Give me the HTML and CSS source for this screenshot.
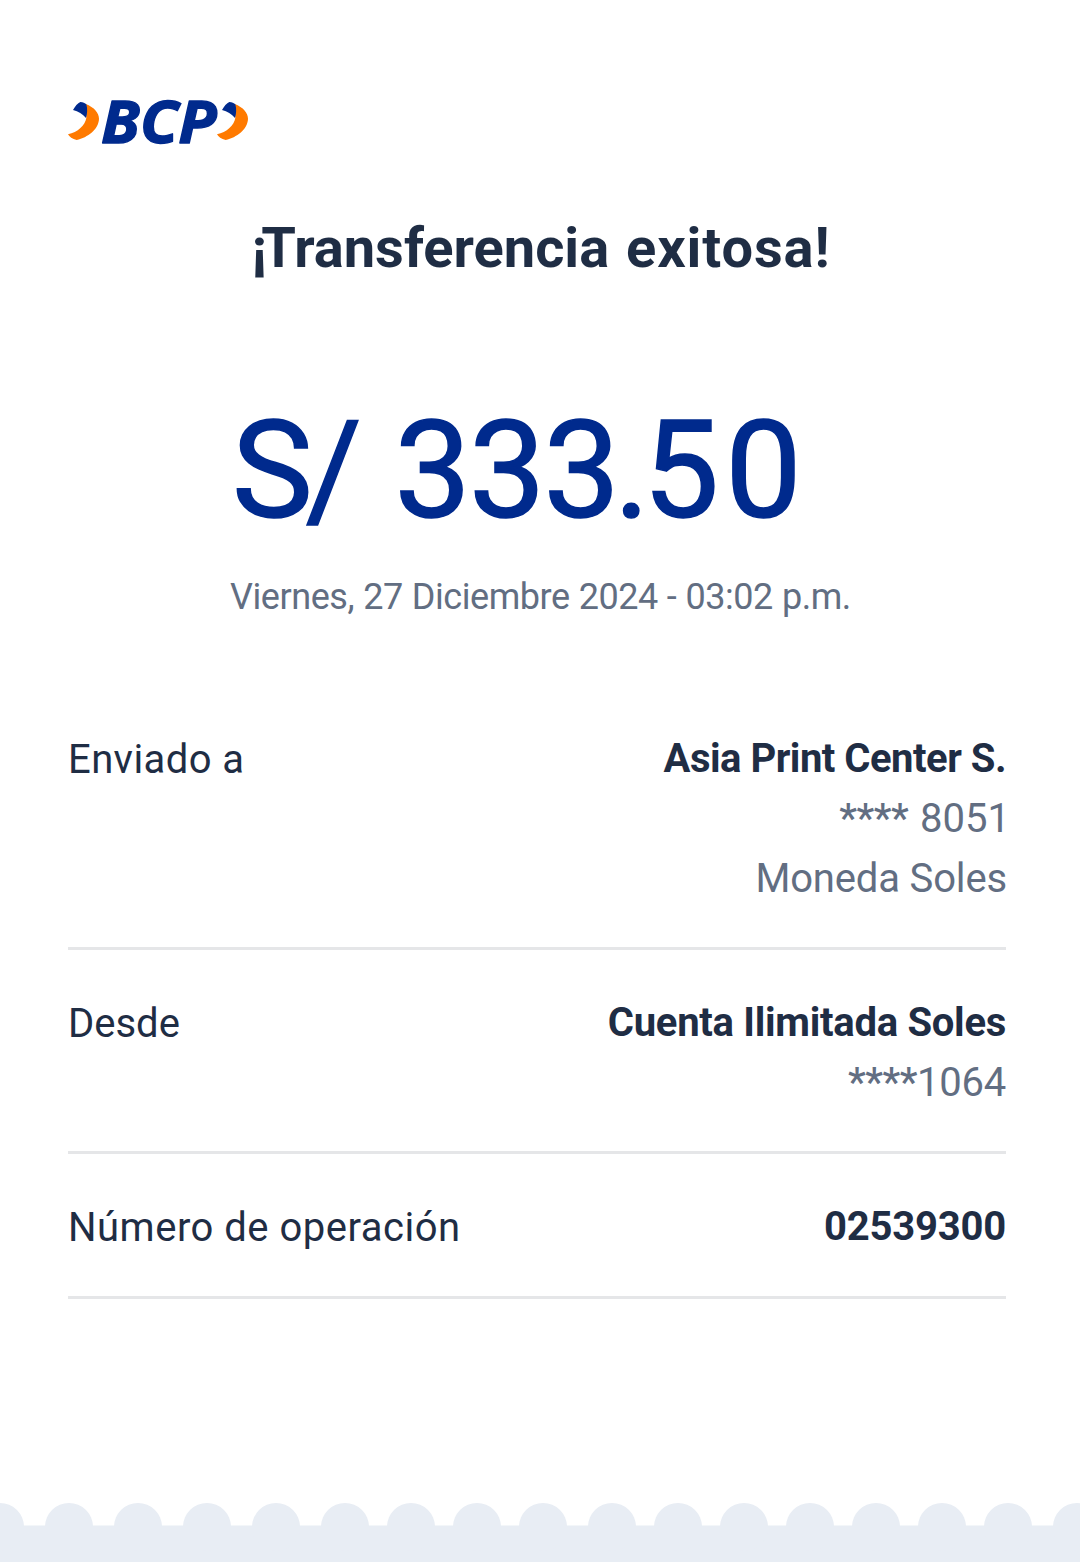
FILE: index.html
```html
<!DOCTYPE html>
<html lang="es">
<head>
<meta charset="utf-8">
<title>Transferencia exitosa</title>
<link rel="stylesheet" href="styles.css">
</head>
<body>
<main class="receipt">
  <svg class="logo" viewBox="39 36 543 141" role="img" aria-label="BCP">
    <defs>
      <g id="chevron">
        <path fill="#ff7a00" d="M92 57C118 67 132 84 132 101C131 133 98 157 65 165C52 162 43 156 39 148C68 141 91 121 94 98Z"/>
        <path fill="#002a8d" d="M54 75C60 64 68 55 76 51C84 51 90 54 94 58C98 72 97 87 93 99C83 88 70 78 54 75Z"/>
      </g>
    </defs>
    <use href="#chevron"/>
    <use href="#chevron" x="447"/>
    <text class="logo-name" x="138" y="173" textLength="347" lengthAdjust="spacingAndGlyphs">BCP</text>
  </svg>
  <h1 class="title"><span class="title-mark">¡</span>Transferencia <span class="title-end">exitosa!</span></h1>
  <p class="amount"><span class="currency">S</span>/ 33<span class="unit">3</span><span class="point">.</span><span class="tenths">5</span>0</p>
  <p class="date">Viernes, 27 Diciembre 2024 - 03:02 p.m.</p>
  <dl class="details">
    <div class="row">
      <dt class="label label-to">Enviado a</dt>
      <dd class="value">
        <strong class="name name-to">Asia Print Center S.</strong>
        <span class="sub sub-account"><span class="mask">****</span> 8051</span>
        <span class="sub sub-currency">Moneda Soles</span>
      </dd>
    </div>
    <div class="row">
      <dt class="label">Desde</dt>
      <dd class="value">
        <strong class="name name-from">Cuenta Ilimitada Soles</strong>
        <span class="sub sub-origin"><span class="mask">****</span>1064</span>
      </dd>
    </div>
    <div class="row row-last">
      <dt class="label label-number">Número de operación</dt>
      <dd class="value"><strong class="name name-number">02539300</strong></dd>
    </div>
  </dl>
  <svg class="edge" viewBox="0 0 1080 59" aria-hidden="true">
    <rect y="22.5" width="1080" height="37"/>
    <circle cx="0" cy="24" r="24"/><circle cx="69" cy="24" r="24"/><circle cx="138" cy="24" r="24"/>
    <circle cx="207" cy="24" r="24"/><circle cx="276" cy="24" r="24"/><circle cx="345" cy="24" r="24"/>
    <circle cx="411" cy="24" r="24"/><circle cx="477" cy="24" r="24"/><circle cx="543" cy="24" r="24"/>
    <circle cx="612" cy="24" r="24"/><circle cx="678" cy="24" r="24"/><circle cx="744" cy="24" r="24"/>
    <circle cx="810" cy="24" r="24"/><circle cx="876" cy="24" r="24"/><circle cx="942" cy="24" r="24"/>
    <circle cx="1008" cy="24" r="24"/><circle cx="1077" cy="24" r="24"/>
  </svg>
</main>
</body>
</html>
```
FILE: styles.css
```css
* { box-sizing: border-box; }
body {
  margin: 0;
  background: #fff;
  color: #1f2d44;
  font-family: Roboto, "Liberation Sans", sans-serif;
}
.receipt {
  display: flex;
  flex-direction: column;
  width: 1080px;
  height: 1562px;
  padding-top: 97px;
}
.logo {
  display: block;
  flex: none;
  width: 181px;
  height: 47px;
  margin-left: 68px;
  overflow: visible;
}
.logo-name {
  fill: #002a8d;
  font: italic 700 178px "Open Sans", "Noto Sans", sans-serif;
  stroke: #002a8d;
  stroke-width: 4px;
  stroke-linejoin: round;
}
.title {
  margin: 64px 0 0;
  padding-left: 2px;
  font-size: 56px;
  line-height: 80px;
  font-weight: 700;
  text-align: center;
  white-space: nowrap;
  word-spacing: 3px;
}
.title-mark { letter-spacing: -6px; }
.title-end { letter-spacing: 0.9px; }
.amount {
  margin: 103px 0 0;
  padding-left: 232px;
  color: #002a8d;
  font-size: 136px;
  line-height: 160px;
  font-weight: 400;
  letter-spacing: -2px;
  word-spacing: 3px;
  white-space: pre;
  -webkit-text-stroke: 1.5px #002a8d;
}
.currency { letter-spacing: -7px; }
.unit { letter-spacing: -6px; }
.point { letter-spacing: -7px; }
.tenths { letter-spacing: 6px; }
.date {
  margin: 16px 0 0;
  padding-left: 1px;
  color: #626e82;
  font-size: 36px;
  line-height: 60px;
  letter-spacing: -0.45px;
  word-spacing: 0.6px;
  text-align: center;
  white-space: nowrap;
}
.details { margin: 59px 74px 0 68px; }
.row {
  display: flex;
  justify-content: space-between;
  padding: 43px 0 38px;
  border-bottom: 3px solid #e5e6e8;
  font-size: 40px;
  line-height: 60px;
}
.row-last { padding-bottom: 39px; }
.label { padding-top: 1px; margin-bottom: -1px; }
.label-to { letter-spacing: 0.4px; }
.label-number { letter-spacing: 0.5px; }
.value {
  display: flex;
  flex-direction: column;
  align-items: flex-end;
  margin: 0;
  white-space: nowrap;
}
.name { font-weight: 700; }
.name-to { letter-spacing: -0.5px; }
.name-from { letter-spacing: -0.28px; }
.name-number { letter-spacing: -0.2px; }
.sub { color: #626e82; }
.sub-account { margin-right: -4px; word-spacing: 2px; }
.sub-currency { margin-right: -1px; letter-spacing: -0.15px; }
.mask { font-weight: 500; letter-spacing: -0.5px; }
.sub-origin { letter-spacing: -0.2px; }
.edge {
  display: block;
  flex: none;
  width: 1080px;
  height: 59px;
  margin-top: auto;
  fill: #e8edf4;
}
```
